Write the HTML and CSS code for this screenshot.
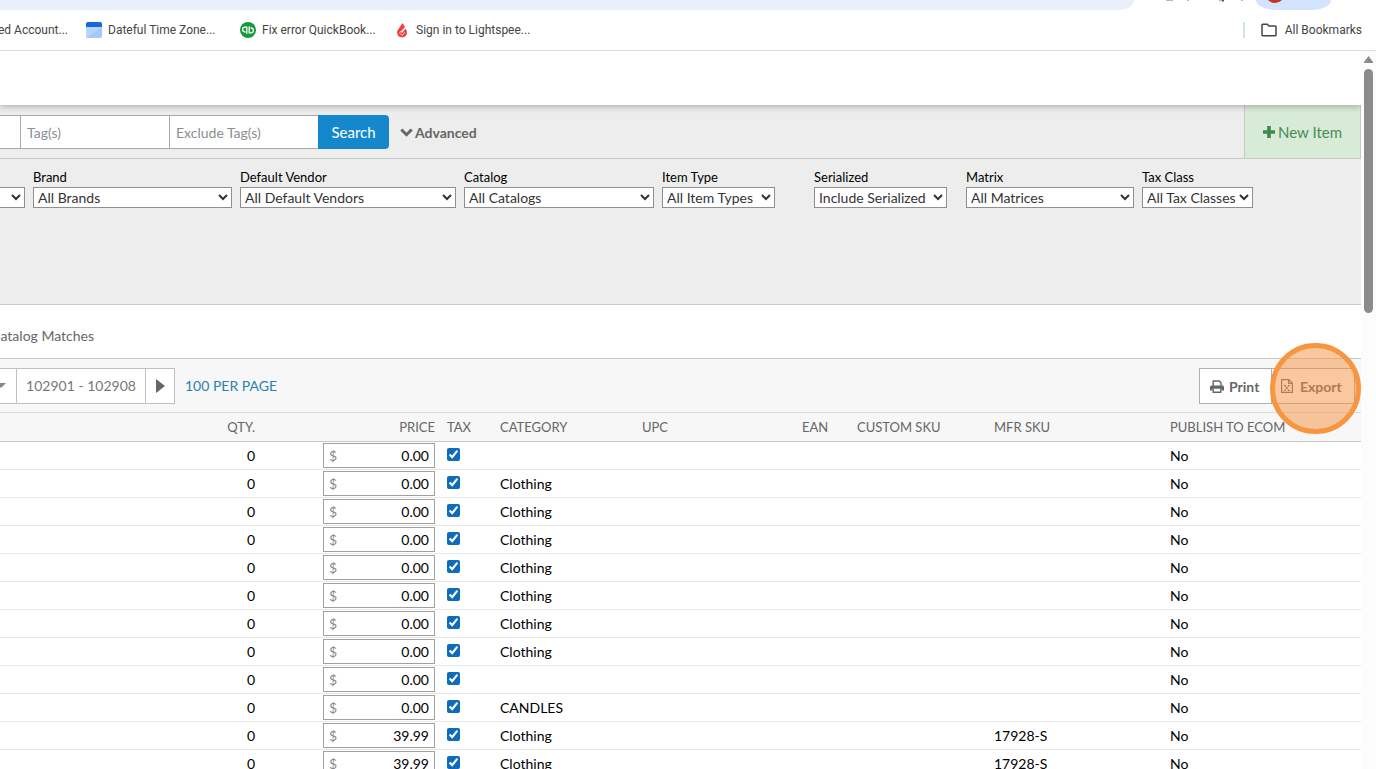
FILE: index.html
```html
<!DOCTYPE html>
<html lang="en">
<head>
  <meta charset="UTF-8">
  <title>Items</title>
  <link rel="stylesheet" href="styles.css">
</head>
<body>

  <div class="browser-top">
    <div class="address"></div>
    <svg class="top-icons" width="122" height="10" viewBox="0 0 122 10">
      <path d="M32 0h7M53 0h2M85 0h3M107 0h2" stroke="#b5b8bb" stroke-width="2"/>
      <path d="M88 0h2" stroke="#555" stroke-width="3"/>
    </svg>
    <div class="profile"><span class="avatar"></span></div>
  </div>

  <nav class="bookmarks">
    <a href="#" class="bookmark cut">ed Account...</a>
    <a href="#" class="bookmark">
      <svg width="16" height="16" viewBox="0 0 16 16">
        <rect width="16" height="16" rx="2" fill="#a5c8f8"/>
        <path d="M0 16V5h16z" fill="#b7d4fb"/>
        <path d="M0 5V2a2 2 0 0 1 2-2h12a2 2 0 0 1 2 2v3z" fill="#1868d8"/>
      </svg>
      <span class="title">Dateful Time Zone...</span>
    </a>
    <a href="#" class="bookmark">
      <svg width="16" height="16" viewBox="0 0 16 16">
        <circle cx="8" cy="8" r="8" fill="#16993a"/>
        <path d="M6.8 11.8V5.2H5a2.3 2.3 0 0 0 0 4.8h.5M9.2 4.2v6.6H11A2.3 2.3 0 0 0 11 6h-.5" fill="none" stroke="#fff" stroke-width="1.3"/>
      </svg>
      <span class="title">Fix error QuickBook...</span>
    </a>
    <a href="#" class="bookmark">
      <svg width="16" height="16" viewBox="0 0 16 16">
        <path d="M8.500 1l2.500 4-4 4.500 1 1.500 3.500-4.500C13 9 13.500 11 12.200 13.200 10.500 16 5.500 16 3.800 13.200 2.600 11 3 9 4.500 7z" fill="#e8413f"/>
        <path d="M7 9l-1.500 2 2.500 2.500 3-3.500" fill="none" stroke="#fff" stroke-width=".7"/>
      </svg>
      <span class="title">Sign in to Lightspee...</span>
    </a>
    <a href="#" class="bookmark all">
      <svg width="16" height="14" viewBox="0 0 16 14">
        <path d="M1 2.500V12a.7.7 0 0 0 .7.700h12.600A.7.700 0 0 0 15 12V3.700a.7.700 0 0 0-.7-.7H8L6.300 1.300H1.700A.7.700 0 0 0 1 2z" fill="none" stroke="#444" stroke-width="1.500"/>
      </svg>
      <span>All Bookmarks</span>
    </a>
  </nav>

  <div class="window">
    <main class="page">
      <header class="page-header"></header>

      <form class="search-bar">
        <input type="text" class="search-input first" aria-label="Description">
        <input type="text" class="search-input" placeholder="Tag(s)" aria-label="Tags">
        <input type="text" class="search-input" placeholder="Exclude Tag(s)" aria-label="Exclude tags">
        <button type="button" class="search-btn">Search</button>
        <button type="button" class="advanced-btn">
          <svg width="13" height="9" viewBox="0 0 13 9"><path d="M1.300 1.500l5.200 5.200 5.200-5.200" fill="none" stroke="#666" stroke-width="3"/></svg>
          Advanced
        </button>
        <button type="button" class="new-btn">
          <svg width="12" height="12" viewBox="0 0 12 12"><path d="M6 0v12M0 6h12" stroke="#3d8b4b" stroke-width="3.600"/></svg>
          New Item
        </button>
      </form>

      <section class="filters">
        <div class="filter w-cut">
          <select aria-label="Category"><option></option></select>
        </div>
        <div class="filter w-brand">
          <label for="brand">Brand</label>
          <select id="brand"><option>All Brands</option></select>
        </div>
        <div class="filter w-vendor">
          <label for="vendor">Default Vendor</label>
          <select id="vendor"><option>All Default Vendors</option></select>
        </div>
        <div class="filter w-catalog">
          <label for="catalog">Catalog</label>
          <select id="catalog"><option>All Catalogs</option></select>
        </div>
        <div class="filter w-short">
          <label for="type">Item Type</label>
          <select id="type" class="s-type"><option>All Item Types</option></select>
        </div>
        <div class="filter w-short">
          <label for="serialized">Serialized</label>
          <select id="serialized" class="s-serial"><option>Include Serialized</option></select>
        </div>
        <div class="filter w-matrix">
          <label for="matrix">Matrix</label>
          <select id="matrix"><option>All Matrices</option></select>
        </div>
        <div class="filter w-tax">
          <label for="taxclass">Tax Class</label>
          <select id="taxclass"><option>All Tax Classes</option></select>
        </div>
      </section>

      <div class="tabs">
        <a href="#" class="tab">atalog Matches</a>
      </div>

      <div class="toolbar">
        <button class="pager-btn pager-menu" aria-label="Choose page">
          <svg width="10" height="5" viewBox="0 0 10 5"><path d="M0 0h10L5 5z" fill="#888"/></svg>
        </button>
        <span class="pager-range">102901 - 102908</span>
        <button class="pager-btn pager-next" aria-label="Next page">
          <svg width="9" height="14" viewBox="0 0 9 14"><path d="M0 0l9 7-9 7z" fill="#666"/></svg>
        </button>
        <a href="#" class="per-page">100 PER PAGE</a>

        <div class="actions">
          <button class="action-btn print">
            <svg width="14" height="13" viewBox="0 0 14 13">
              <path d="M3.200 6V1h6l1.800 1.800V6" fill="none" stroke="#666" stroke-width="1.400"/>
              <path d="M1.500 5.500h11A1.500 1.500 0 0 1 14 7v3.500h-2.500V8.800h-9v1.700H0V7a1.500 1.500 0 0 1 1.500-1.500z" fill="#666"/>
              <path d="M3.200 8.500v3.700h7.600V8.500" fill="none" stroke="#666" stroke-width="1.400"/>
            </svg>
            Print
          </button>
          <button class="action-btn export">
            <svg width="12" height="14" viewBox="0 0 12 14">
              <path d="M.6.600h7.200l3.600 3.600v9.200H.6zM7.600.600v3.800h3.800" fill="none" stroke="#666" stroke-width="1.200"/>
              <path d="M3.500 6.500l4.500 5M8 6.500l-4.500 5M2.800 6.500h2M7 6.500h1.800M2.800 11.500h1.800M6.800 11.500h2" stroke="#666"/>
            </svg>
            Export
            <span class="highlight"></span>
          </button>
        </div>
      </div>

      <table class="items">
        <colgroup>
          <col class="c-name"><col class="c-qty"><col class="c-price"><col class="c-tax"><col class="c-cat">
          <col class="c-upc"><col class="c-ean"><col class="c-custom"><col class="c-mfr"><col>
        </colgroup>
        <thead>
          <tr>
            <th></th>
            <th class="right">QTY.</th>
            <th class="right">PRICE</th>
            <th>TAX</th>
            <th>CATEGORY</th>
            <th>UPC</th>
            <th>EAN</th>
            <th>CUSTOM SKU</th>
            <th>MFR SKU</th>
            <th>PUBLISH TO ECOM</th>
          </tr>
        </thead>
        <tbody id="rows"></tbody>
      </table>
    </main>

    <div class="scrollbar">
      <svg width="9" height="7" viewBox="0 0 9 7"><path d="M4.500 0L9 6v1H0V6z" fill="#8b8b8b"/></svg>
      <div class="thumb"></div>
    </div>
  </div>

  <script>
    const items = [
      ['0.00', '', ''],
      ['0.00', 'Clothing', ''],
      ['0.00', 'Clothing', ''],
      ['0.00', 'Clothing', ''],
      ['0.00', 'Clothing', ''],
      ['0.00', 'Clothing', ''],
      ['0.00', 'Clothing', ''],
      ['0.00', 'Clothing', ''],
      ['0.00', '', ''],
      ['0.00', 'CANDLES', ''],
      ['39.99', 'Clothing', '17928-S'],
      ['39.99', 'Clothing', '17928-S']
    ];

    document.getElementById('rows').innerHTML = items.map(([price, category, sku], i) => `
      <tr>
        <td></td>
        <td class="right">0</td>
        <td>
          <div class="price">
            <label for="price${i}">$</label>
            <input type="text" id="price${i}" value="${price}">
          </div>
        </td>
        <td><input type="checkbox" class="tax" aria-label="Tax" checked></td>
        <td>${category}</td>
        <td></td>
        <td></td>
        <td></td>
        <td>${sku}</td>
        <td>No</td>
      </tr>`).join('');
  </script>

</body>
</html>
```
FILE: styles.css
```css
* {
  box-sizing: border-box;
}

body {
  margin: 0;
  height: 100vh;
  display: flex;
  flex-direction: column;
  overflow: hidden;
  font-family: Lato, "Liberation Sans", sans-serif;
  font-size: 14px;
  color: #000;
  background: #fff;
}

a {
  text-decoration: none;
}

button,
input,
select {
  font-family: inherit;
  font-size: 14px;
  margin: 0;
}

button {
  cursor: pointer;
}

svg {
  flex: none;
}

/* browser chrome */
.browser-top {
  display: flex;
  flex: none;
  height: 10px;
  padding-right: 45px;
}

.address {
  flex: 1;
  background: #e9f0f9;
  border-bottom-right-radius: 14px 10px;
}

.profile {
  width: 75px;
  overflow: hidden;
  background: #d3e3fd;
  border-radius: 0 0 20px 20px / 0 0 10px 10px;
}

.avatar {
  display: block;
  width: 20px;
  height: 20px;
  margin: -17px 0 0 9px;
  border-radius: 50%;
  background: #c5351c;
}

.bookmarks {
  display: flex;
  flex: none;
  align-items: center;
  gap: 18px;
  height: 41px;
  padding-right: 14px;
  border-bottom: 1px solid #dcdcdc;
}

.bookmark {
  display: flex;
  align-items: center;
  gap: 6px;
  font-family: Roboto, "Open Sans", sans-serif;
  font-size: 12px;
  color: #444;
  white-space: nowrap;
}

.bookmark .title {
  width: 114px;
}

.cut {
  width: 68px;
  justify-content: flex-end;
}

.all {
  gap: 8px;
  margin-left: auto;
  height: 16px;
  padding-left: 16px;
  border-left: 2px solid #d0e4ee;
}

/* page */
.window {
  display: flex;
  flex: 1;
  min-height: 0;
}

.page {
  flex: 1;
  min-width: 0;
  overflow: hidden;
}

.page-header {
  position: relative;
  height: 54px;
  background: #fff;
  box-shadow: 0 1px 7px rgba(0, 0, 0, .3);
}

.search-bar {
  display: flex;
  align-items: center;
  height: 54px;
  background: #ededed;
  border-bottom: 1px solid #c8c8c8;
}

.search-input {
  width: 150px;
  height: 34px;
  margin-right: -1px;
  padding: 1px 6px 0;
  border: 1px solid #a9a9a9;
  border-radius: 0;
  background: #fff;
}

.search-input.first {
  width: 21px;
  border-left: 0;
}

.search-input::placeholder {
  color: #8a8f94;
}

.search-btn {
  position: relative;
  width: 71px;
  height: 34px;
  padding: 0;
  border: 0;
  border-radius: 0 4px 4px 0;
  background: #1588cd;
  color: #fff;
  font-size: 15px;
}

.advanced-btn {
  display: flex;
  align-items: center;
  gap: 2px;
  margin-left: 11px;
  padding: 1px 0 0;
  border: 0;
  background: none;
  font-weight: bold;
  color: #666;
}

.new-btn {
  display: flex;
  align-items: center;
  justify-content: center;
  align-self: stretch;
  gap: 3px;
  width: 117px;
  margin-left: auto;
  border: 1px solid #c8c8c8;
  border-width: 0 1px;
  background: #d8ead8;
  color: #4a8c56;
  font-size: 15px;
}

.filters {
  display: flex;
  gap: 8px;
  height: 146px;
  padding-top: 10px;
  background: #ededed;
  border-bottom: 1px solid #c8c8c8;
}

.filter {
  flex: none;
}

.filter label {
  display: block;
  height: 18px;
  font-size: 13px;
  line-height: 16px;
}

.filter select {
  display: block;
  width: 100%;
  height: 21px;
  padding: 0;
  border: 1px solid #8f8f8f;
  border-radius: 0;
  background: #fff;
  color: #333;
}

.w-cut {
  width: 25px;
  padding-top: 18px;
}

.filter.w-cut select {
  border-left: 0;
}

.w-brand { width: 199px; }
.w-vendor { width: 216px; }
.w-catalog { width: 190px; }
.w-short { width: 144px; }
.w-matrix { width: 168px; }
.w-tax { width: 111px; }
.filter .s-type { width: 113px; }
.filter .s-serial { width: 133px; }

.tabs {
  display: flex;
  align-items: center;
  height: 53px;
  padding-top: 8px;
}

.tab {
  width: 94px;
  text-align: right;
  white-space: nowrap;
  color: #666;
}

.toolbar {
  display: flex;
  align-items: center;
  height: 55px;
  padding-right: 6px;
  background: #f7f7f7;
  border-top: 1px solid #c8c8c8;
  border-bottom: 1px solid #dcdcdc;
}

.pager-btn,
.pager-range {
  display: flex;
  align-items: center;
  justify-content: center;
  height: 36px;
  padding: 0;
  border: 1px solid #c0c0c0;
  background: #fff;
  color: #777;
}

.pager-menu {
  justify-content: flex-end;
  width: 17px;
  padding-right: 10px;
  border-left: 0;
}

.pager-range {
  width: 130px;
  margin: 0 -1px;
}

.pager-next {
  width: 30px;
}

.per-page {
  margin-left: 10px;
  color: #2b7fb0;
}

.actions {
  display: flex;
  margin-left: auto;
}

.action-btn {
  position: relative;
  display: flex;
  align-items: center;
  height: 36px;
  padding: 1px 10px 0;
  border: 1px solid #b0b0b0;
  background: #fff;
  font-weight: bold;
  color: #666;
}

.print {
  gap: 5px;
  width: 73px;
}

.export {
  gap: 7px;
  width: 84px;
  margin-left: -1px;
  padding-left: 9px;
}

/* click marker over the export button */
.highlight {
  position: absolute;
  top: -26px;
  left: -2px;
  width: 91px;
  height: 91px;
  border: 5px solid #f79540;
  border-radius: 50%;
  background: rgba(243, 146, 64, .5);
  z-index: 2;
}

/* items */
.items {
  width: 100%;
  table-layout: fixed;
  border-collapse: collapse;
}

.c-name { width: 200px; }
.c-qty { width: 61px; }
.c-price { width: 180px; }
.c-tax { width: 53px; }
.c-cat { width: 142px; }
.c-upc { width: 160px; }
.c-ean { width: 55px; }
.c-custom { width: 137px; }
.c-mfr { width: 176px; }

.items th {
  height: 28px;
  padding: 0 6px;
  background: #f7f7f7;
  border-bottom: 1px solid #c8c8c8;
  font-size: 13px;
  font-weight: normal;
  text-align: left;
  white-space: nowrap;
  color: #666;
}

.items td {
  height: 28px;
  padding: 0 6px;
  border-bottom: 1px solid #e8e8e8;
}

.items .right {
  text-align: right;
}

.price {
  display: flex;
  align-items: center;
  width: 112px;
  height: 25px;
  margin-left: auto;
  padding: 0 5px;
  border: 1px solid #a0a0a0;
  background: #fff;
}

.price label {
  color: #888;
}

.price input {
  flex: 1;
  min-width: 0;
  padding: 0;
  border: 0;
  background: none;
  text-align: right;
}

.tax {
  display: block;
  width: 13px;
  height: 13px;
  margin-bottom: 2px;
  accent-color: #0f6cbd;
}

.scrollbar {
  display: flex;
  flex-direction: column;
  align-items: center;
  gap: 6px;
  width: 15px;
  padding-top: 5px;
  background: #fcfcfc;
}

.thumb {
  width: 9px;
  height: 244px;
  border-radius: 5px;
  background: #8b8b8b;
}
```
